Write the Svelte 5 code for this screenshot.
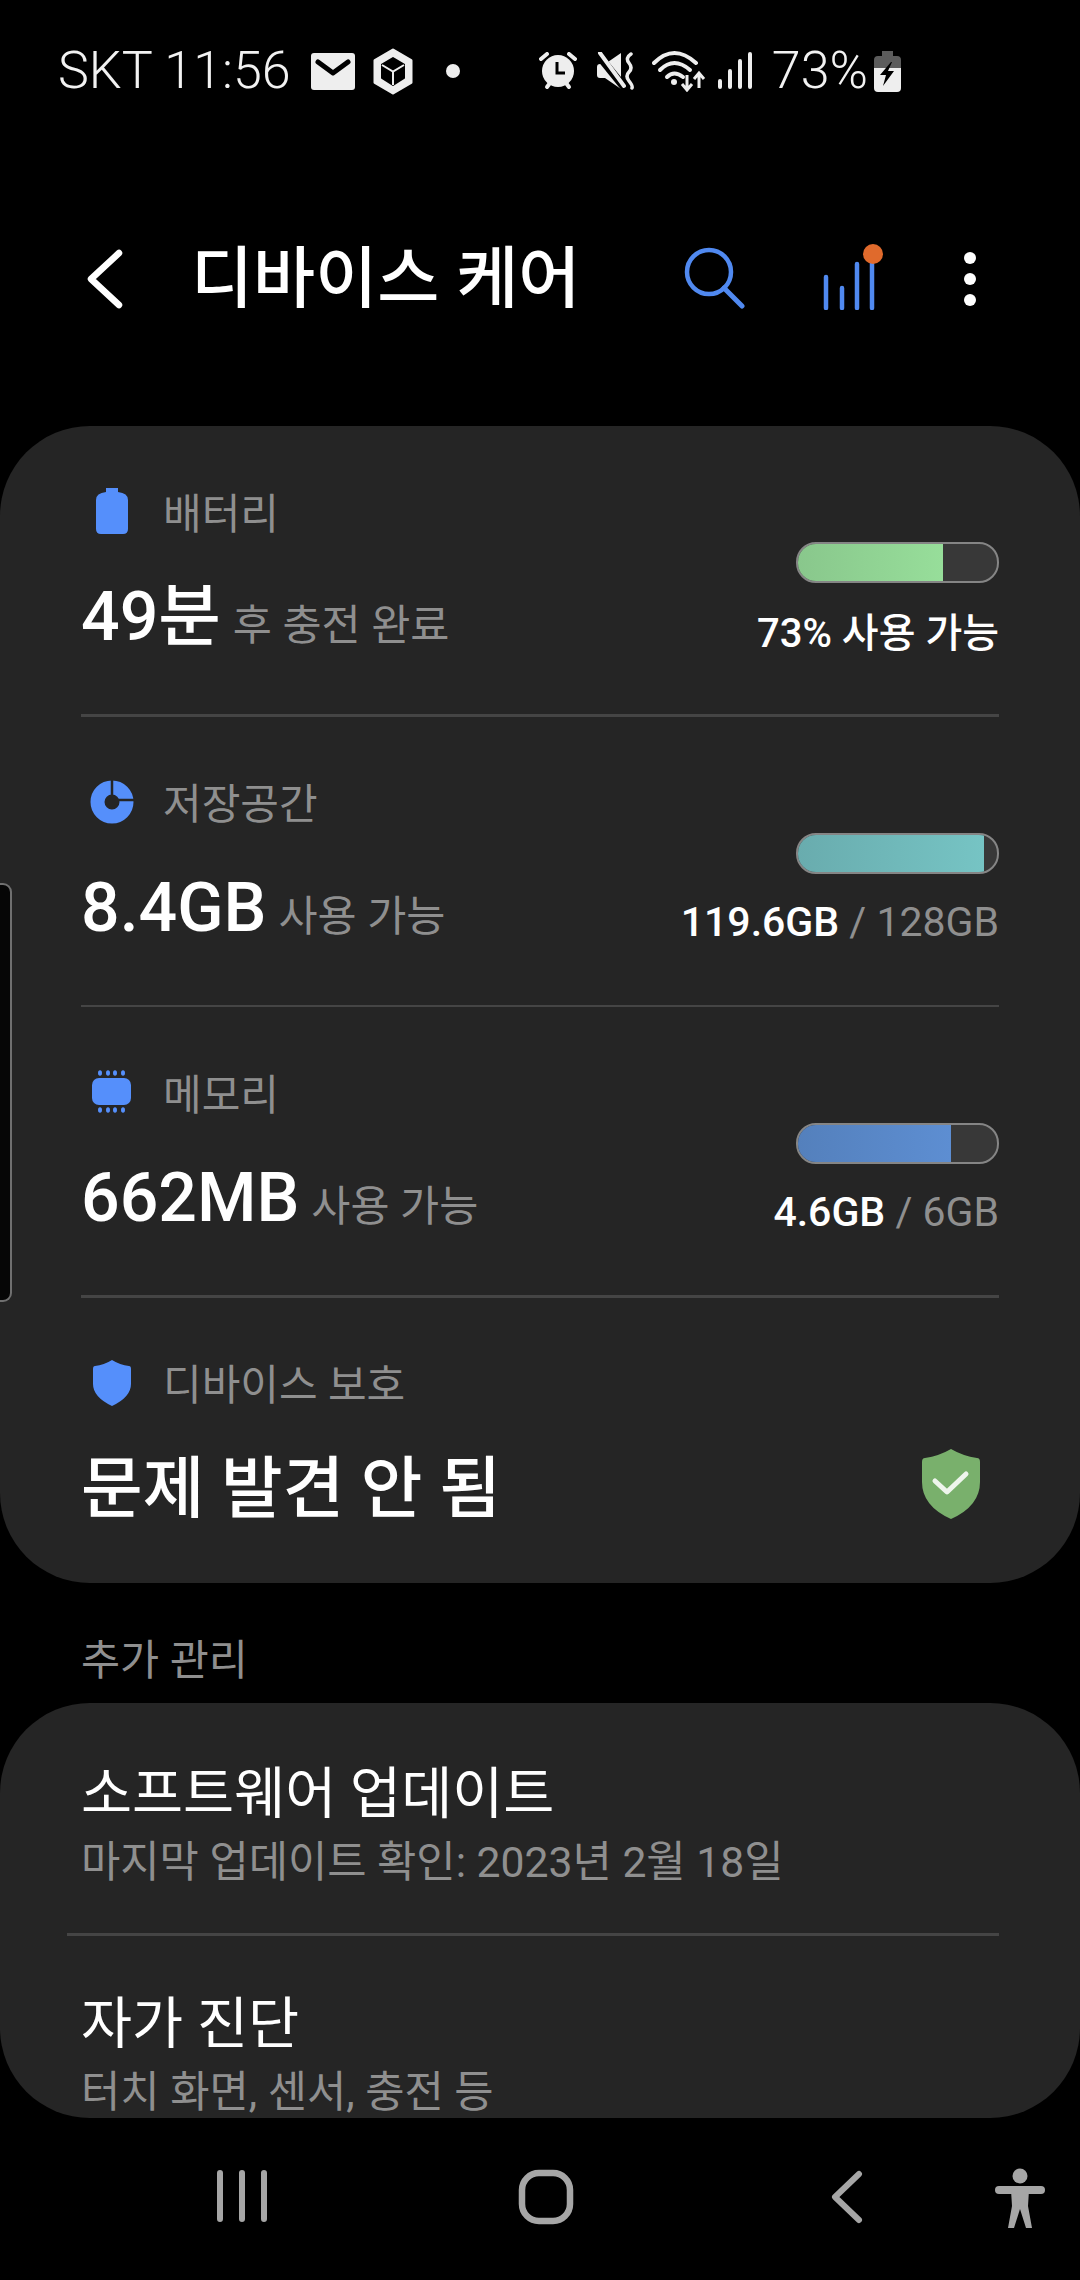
<script>
	const meters = [
		{
			key: 'battery',
			label: '배터리',
			value: '49분',
			note: '후 충전 완료',
			used: '73% 사용 가능',
			total: '',
			percent: 73,
			fill: 'green'
		},
		{
			key: 'storage',
			label: '저장공간',
			value: '8.4GB',
			note: '사용 가능',
			used: '119.6GB',
			total: ' / 128GB',
			percent: 93.5,
			fill: 'teal'
		},
		{
			key: 'memory',
			label: '메모리',
			value: '662MB',
			note: '사용 가능',
			used: '4.6GB',
			total: ' / 6GB',
			percent: 77,
			fill: 'blue'
		}
	];
</script>

<div class="screen">
	<div class="status">
		<div class="status-side">
			<span class="status-text">SKT 11:56</span>
			<!-- mail -->
			<svg class="mail" width="44" height="37" viewBox="0 0 44 37">
				<rect width="44" height="37" rx="3" fill="#eee" />
				<path d="M7 9l15 11L37 9" fill="none" stroke="#000" stroke-width="5" stroke-linecap="round" stroke-linejoin="round" />
			</svg>
			<!-- package -->
			<svg class="box" width="42" height="47" viewBox="0 0 42 47">
				<path d="M21 2L39 12.5V34.5L21 45L3 34.5V12.5Z" fill="#eee" stroke="#eee" stroke-width="3" stroke-linejoin="round" />
				<path d="M21 10L32 16.5V30L21 37L10 30V16.5Z" fill="#000" stroke="#000" stroke-width="2" stroke-linejoin="round" />
				<path d="M10 17L21 23.5L32 17M21 23.5V37" fill="none" stroke="#eee" stroke-width="2" />
			</svg>
			<span class="dot"></span>
		</div>
		<div class="status-side">
			<!-- alarm -->
			<svg width="38" height="38" viewBox="0 0 38 38">
				<path d="M2 7l6-5M36 7l-6-5" stroke="#eee" stroke-width="4" stroke-linecap="round" />
				<path d="M8 35l3-4M30 35l-3-4" stroke="#eee" stroke-width="4" stroke-linecap="round" />
				<circle cx="19" cy="19" r="16" fill="#eee" />
				<path d="M18 10v11h8" fill="none" stroke="#000" stroke-width="3" />
			</svg>
			<!-- muted speaker -->
			<svg class="mute" width="40" height="38" viewBox="0 0 40 38">
				<path d="M0 15q0-3 3-3h5L24 1v36L8 26H3q-3 0-3-3Z" fill="#eee" />
				<path d="M1 3l26 32" stroke="#000" stroke-width="8" />
				<path d="M3 1l24 33" stroke="#eee" stroke-width="4" stroke-linecap="round" />
				<path d="M34 2q-6 4-2 9t0 9t0 9t3 7" fill="none" stroke="#eee" stroke-width="3.5" stroke-linecap="round" />
			</svg>
			<!-- wifi with traffic arrows -->
			<svg class="wifi" width="54" height="42" viewBox="0 0 54 42">
				<path d="M2 13Q22-7 44 13" fill="none" stroke="#eee" stroke-width="4" stroke-linecap="round" />
				<path d="M8 20Q22 6 38 20" fill="none" stroke="#eee" stroke-width="4" stroke-linecap="round" />
				<path d="M15 27Q22 20 31 27" fill="none" stroke="#eee" stroke-width="4" stroke-linecap="round" />
				<circle cx="22" cy="32" r="3" fill="#eee" />
				<path d="M35 25v15M30 34l5 6 5-6" fill="none" stroke="#eee" stroke-width="3" />
				<path d="M47 38V24M42 29l5-6 5 6" fill="none" stroke="#eee" stroke-width="3" />
			</svg>
			<!-- signal -->
			<svg class="signal" width="36" height="38" viewBox="0 0 36 38">
				<path d="M3 35v-6M13 35V19M23 35V9M33 35V2" stroke="#eee" stroke-width="4" stroke-linecap="round" />
			</svg>
			<span class="status-text pct">73%</span>
			<!-- charging battery -->
			<svg class="charge" width="27" height="41" viewBox="0 0 27 41">
				<path d="M8 0h11v5h4q4 0 4 4v8H0V9q0-4 4-4h4Z" fill="#5c5c5c" />
				<path d="M0 17h27v20q0 4-4 4H4q-4 0-4-4Z" fill="#eee" />
				<path d="M17 11L6 24h6l-3 11 11-15h-6l4-9Z" fill="#000" />
			</svg>
		</div>
	</div>

	<header class="topbar">
		<svg class="back" width="40" height="60" viewBox="0 0 40 60">
			<path d="M33 4L5 30l28 26" fill="none" stroke="#fff" stroke-width="6.5" stroke-linecap="round" stroke-linejoin="round" />
		</svg>
		<h1>디바이스 케어</h1>
		<svg class="search" width="62" height="62" viewBox="0 0 62 62">
			<circle cx="25" cy="25" r="22" fill="none" stroke="#5089f0" stroke-width="4.5" />
			<path d="M40 41l18 18" stroke="#5089f0" stroke-width="5" stroke-linecap="round" />
		</svg>
		<svg class="stats" width="62" height="66" viewBox="0 0 62 66">
			<path d="M4 33v31M20 44v20M35 20v44M50 10v54" stroke="#5089f0" stroke-width="4.5" stroke-linecap="round" />
			<circle cx="51" cy="10" r="10" fill="#e06a2c" />
		</svg>
		<div class="kebab">
			<span></span>
			<span></span>
			<span></span>
		</div>
	</header>

	<section class="card main-card">
		{#each meters as m}
			<div class="row">
				<div class="left">
					<div class="label">
						<span class="icon">
							{#if m.key === 'battery'}
								<svg width="32" height="46" viewBox="0 0 32 46">
									<path d="M10 0h12v4q10 1 10 8v29q0 5-5 5H5q-5 0-5-5V12Q0 5 10 4Z" fill="#558ffb" />
								</svg>
							{:else if m.key === 'storage'}
								<svg width="44" height="44" viewBox="0 0 44 44">
									<circle cx="22" cy="22" r="14.5" fill="none" stroke="#558ffb" stroke-width="14" />
									<path d="M22 0v16M28 20h16" stroke="#252525" stroke-width="2.5" />
								</svg>
							{:else}
								<svg width="40" height="44" viewBox="0 0 40 44">
									<rect x="0" y="8" width="39" height="27" rx="7" fill="#558ffb" />
									<g fill="#558ffb">
										<ellipse cx="8" cy="3" rx="2" ry="2.8" />
										<ellipse cx="16" cy="3" rx="2" ry="2.8" />
										<ellipse cx="23" cy="3" rx="2" ry="2.8" />
										<ellipse cx="31" cy="3" rx="2" ry="2.8" />
										<ellipse cx="8" cy="40" rx="2" ry="2.8" />
										<ellipse cx="16" cy="40" rx="2" ry="2.8" />
										<ellipse cx="23" cy="40" rx="2" ry="2.8" />
										<ellipse cx="31" cy="40" rx="2" ry="2.8" />
									</g>
								</svg>
							{/if}
						</span>
						{m.label}
					</div>
					<div class="value">{m.value}<span class="note">{m.note}</span></div>
				</div>
				<div class="right">
					<div class="bar">
						<div class="bar-fill {m.fill}" style="width: {m.percent}%"></div>
					</div>
					<div class="amount" class:split={m.total}>{m.used}<span class="total">{m.total}</span></div>
				</div>
			</div>
			<div class="divider"></div>
		{/each}

		<div class="row protect">
			<div class="left">
				<div class="label">
					<span class="icon">
						<svg width="38" height="46" viewBox="0 0 38 46">
							<path d="M19 0q8 5 17 6 2 0 2 3v15q0 13-19 22Q0 37 0 24V9q0-3 2-3 9-1 17-6Z" fill="#558ffb" />
						</svg>
					</span>
					디바이스 보호
				</div>
				<div class="headline">문제 발견 안 됨</div>
			</div>
			<svg class="ok" width="58" height="70" viewBox="0 0 58 70">
				<path d="M29 0q12 7 26 9 3 0 3 4v20q0 24-29 37Q0 57 0 33V13q0-4 3-4 14-2 26-9Z" fill="#79b06c" />
				<path d="M13 32l12 11 19-18" fill="none" stroke="#eef5ec" stroke-width="5" stroke-linecap="round" stroke-linejoin="round" />
			</svg>
		</div>
	</section>

	<div class="section-title">추가 관리</div>

	<section class="card extra-card">
		<div class="item first">
			<div class="item-title">소프트웨어 업데이트</div>
			<div class="item-sub">마지막 업데이트 확인: 2023년 2월 18일</div>
		</div>
		<div class="divider wide"></div>
		<div class="item">
			<div class="item-title">자가 진단</div>
			<div class="item-sub">터치 화면, 센서, 충전 등</div>
		</div>
	</section>

	<nav class="navbar">
		<svg class="recents" width="50" height="52" viewBox="0 0 50 52">
			<path d="M3 3v46M25 3v46M47 3v46" stroke="#a6a6a6" stroke-width="6" stroke-linecap="round" />
		</svg>
		<svg class="home" width="56" height="56" viewBox="0 0 56 56">
			<rect x="4" y="4" width="48" height="48" rx="17" fill="none" stroke="#a6a6a6" stroke-width="6.5" />
		</svg>
		<svg class="nav-back" width="32" height="54" viewBox="0 0 32 54">
			<path d="M28 4L4 27l24 23" fill="none" stroke="#a6a6a6" stroke-width="6" stroke-linecap="round" stroke-linejoin="round" />
		</svg>
		<svg class="a11y" width="52" height="62" viewBox="0 0 52 62">
			<circle cx="26" cy="8" r="7.5" fill="#a6a6a6" />
			<path d="M5 22h42" stroke="#a6a6a6" stroke-width="8" stroke-linecap="round" />
			<path d="M17 22h18l-1 16 4 22h-6l-6-19-6 19h-6l4-22Z" fill="#a6a6a6" />
		</svg>
	</nav>

	<!-- edge panel handle -->
	<div class="edge-handle"></div>
</div>

<style>
	:global(body) {
		margin: 0;
		background: #000;
	}

	.screen {
		position: relative;
		width: 1080px;
		height: 2280px;
		overflow: hidden;
		background: #000;
		color: #fff;
		font-family: Roboto, 'Noto Sans CJK KR', sans-serif;
	}

	.status {
		display: flex;
		justify-content: space-between;
		align-items: center;
		height: 142px;
		padding: 0 179px 0 58px;
		box-sizing: border-box;
	}

	.status-side {
		display: flex;
		align-items: center;
		height: 50px;
	}

	.status-text {
		font-size: 52px;
		font-weight: 300;
		color: #f2f2f2;
		white-space: nowrap;
		line-height: 50px;
	}

	.mail {
		margin-left: 20px;
	}

	.box {
		margin-left: 17px;
	}

	.dot {
		width: 14px;
		height: 14px;
		margin-left: 32px;
		border-radius: 50%;
		background: #eee;
	}

	.mute {
		margin-left: 20px;
	}

	.wifi {
		margin-left: 15px;
	}

	.signal {
		margin-left: 11px;
	}

	.pct {
		margin-left: 19px;
	}

	.charge {
		margin-left: 6px;
	}

	.topbar {
		display: flex;
		align-items: center;
		height: 134px;
		margin-top: 70px;
		padding-left: 86px;
	}

	.topbar h1 {
		margin: 0 0 0 65px;
		width: 490px;
		font-size: 67.5px;
		font-weight: 500;
		line-height: 80px;
		white-space: nowrap;
	}

	.search {
		margin-left: 3px;
		margin-top: -2px;
	}

	.stats {
		margin-left: 76px;
		margin-top: -4px;
	}

	.kebab {
		display: flex;
		flex-direction: column;
		gap: 9px;
		margin-left: 80px;
	}

	.kebab span {
		width: 12px;
		height: 12px;
		border-radius: 50%;
		background: #fff;
	}

	.card {
		background: #252525;
		border-radius: 90px;
		overflow: hidden;
	}

	.main-card {
		height: 1157px;
		margin-top: 80px;
	}

	.row {
		display: flex;
		justify-content: space-between;
		height: 288px;
		padding: 59px 81px 0 81px;
		box-sizing: border-box;
	}

	.label {
		display: flex;
		align-items: center;
		height: 50px;
		font-size: 42px;
		color: #8f8f8f;
		white-space: nowrap;
	}

	.icon {
		display: flex;
		align-items: center;
		justify-content: center;
		width: 62px;
		margin-right: 20px;
		margin-top: 2px;
	}

	.value {
		margin-top: 42px;
		font-size: 68px;
		font-weight: 500;
		line-height: 80px;
		white-space: nowrap;
	}

	.note {
		margin-left: 12px;
		font-size: 42.5px;
		font-weight: 400;
		color: #8f8f8f;
	}

	.right {
		display: flex;
		flex-direction: column;
		align-items: flex-end;
		padding-top: 57px;
	}

	.bar {
		width: 203px;
		height: 41px;
		box-sizing: border-box;
		border: 2px solid #858585;
		border-radius: 20px;
		background: #383838;
		overflow: hidden;
	}

	.bar-fill {
		height: 100%;
	}

	.green {
		background: linear-gradient(90deg, #89c78c, #97de9a);
	}

	.teal {
		background: linear-gradient(90deg, #69acae, #76c4c4);
	}

	.blue {
		background: linear-gradient(90deg, #5480bc, #5d8ed2);
	}

	.amount {
		margin-top: 26px;
		font-size: 40px;
		font-weight: 500;
		line-height: 50px;
		white-space: nowrap;
	}

	.amount.split {
		margin-top: 23px;
		font-size: 41px;
	}

	.total {
		font-weight: 400;
		color: #8f8f8f;
		white-space: pre;
	}

	.divider {
		height: 2.5px;
		margin: 0 81px;
		background: #454545;
	}

	.divider.wide {
		margin-left: 67px;
	}

	.protect {
		height: 287px;
		align-items: flex-start;
		padding-right: 100px;
	}

	.headline {
		margin-top: 42px;
		font-size: 67px;
		font-weight: 500;
		line-height: 80px;
		white-space: nowrap;
	}

	.ok {
		margin-top: 92px;
	}

	.section-title {
		margin: 53px 0 0 81px;
		height: 50px;
		font-size: 42.5px;
		line-height: 50px;
		color: #8f8f8f;
		white-space: nowrap;
	}

	.extra-card {
		height: 415px;
		margin-top: 17px;
		padding: 0;
	}

	.item {
		height: 184px;
		padding: 55px 0 0 81px;
		box-sizing: border-box;
		white-space: nowrap;
	}

	.item.first {
		height: 230px;
		padding-top: 58px;
	}

	.item-title {
		font-size: 55.5px;
		line-height: 68px;
	}

	.item-sub {
		margin-top: 8px;
		font-size: 42.7px;
		line-height: 50px;
		color: #8f8f8f;
	}

	.navbar {
		display: flex;
		align-items: flex-start;
		padding: 52px 0 0 217px;
	}

	.home {
		margin-left: 251px;
		margin-top: -1px;
	}

	.nav-back {
		margin-left: 257px;
		margin-top: 0;
	}

	.a11y {
		margin-left: 131px;
		margin-top: -2px;
	}

	.edge-handle {
		position: absolute;
		left: 0;
		top: 883px;
		width: 10px;
		height: 415px;
		box-sizing: content-box;
		background: #060606;
		border: 2.5px solid #707070;
		border-left: none;
		border-radius: 0 9px 9px 0;
	}
</style>
